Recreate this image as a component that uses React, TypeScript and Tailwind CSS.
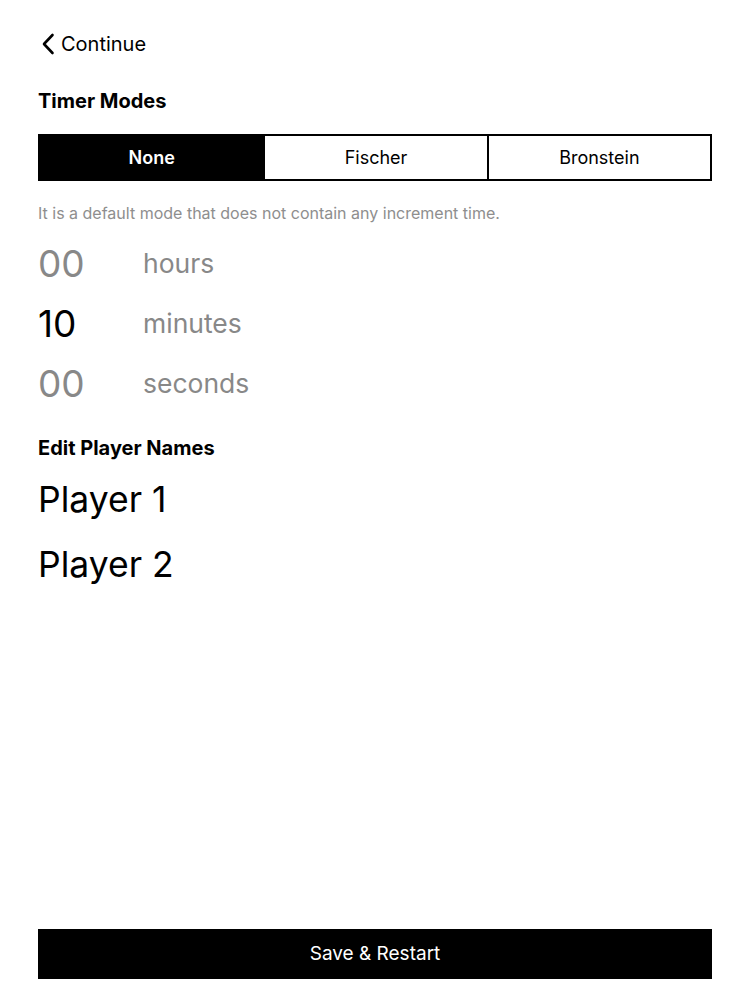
import { useState } from "react";

const modes = ["None", "Fischer", "Bronstein"];

const timeRows = [
  { value: "00", label: "hours", active: false },
  { value: "10", label: "minutes", active: true },
  { value: "00", label: "seconds", active: false },
];

export default function App() {
  const [mode, setMode] = useState("None");

  return (
    <div className="flex min-h-[1000px] flex-col bg-white px-[38px] pb-[21px] font-['Inter','Liberation_Sans',sans-serif] text-black">
      <button className="mt-[31px] flex h-[26px] items-center gap-[6px] self-start">
        <svg width="14" height="22" viewBox="0 0 14 22" fill="none" className="ml-[3px]">
          <path d="M11.5 2L3 11l8.5 9" stroke="black" strokeWidth="2.6" strokeLinecap="round" strokeLinejoin="round" />
        </svg>
        <span className="text-[20px] leading-none">Continue</span>
      </button>

      <h2 className="mt-[32px] text-[20px] font-bold leading-[24px]">Timer Modes</h2>

      <div className="mt-[21px] grid h-[47px] grid-cols-3 border-2 border-black">
        {modes.map((m, i) => (
          <button
            key={m}
            onClick={() => setMode(m)}
            className={`flex items-center justify-center text-[18px] ${
              i > 0 ? "border-l-2 border-black" : ""
            } ${mode === m ? "bg-black font-semibold text-white" : "bg-white text-black"}`}
          >
            {m}
          </button>
        ))}
      </div>

      <p className="mt-[22px] text-[16px] leading-[20px] text-[#8e8e8e]">
        It is a default mode that does not contain any increment time.
      </p>

      <div className="mt-[10px] flex flex-col">
        {timeRows.map((r) => (
          <div key={r.label} className="flex h-[60px] items-center">
            <span className={`w-[105px] text-[37px] leading-none ${r.active ? "text-black" : "text-[#888888]"}`}>
              {r.value}
            </span>
            <span className="text-[26.5px] leading-none text-[#888888]">{r.label}</span>
          </div>
        ))}
      </div>

      <h2 className="mt-[23px] text-[20px] font-bold leading-[24px]">Edit Player Names</h2>

      <div className="mt-[19px] flex flex-col gap-[23px]">
        <span className="text-[35.5px] leading-[42px]">Player 1</span>
        <span className="text-[35.5px] leading-[42px]">Player 2</span>
      </div>

      <button className="mt-auto h-[50px] w-full bg-black text-[19px] text-white">Save &amp; Restart</button>
    </div>
  );
}
